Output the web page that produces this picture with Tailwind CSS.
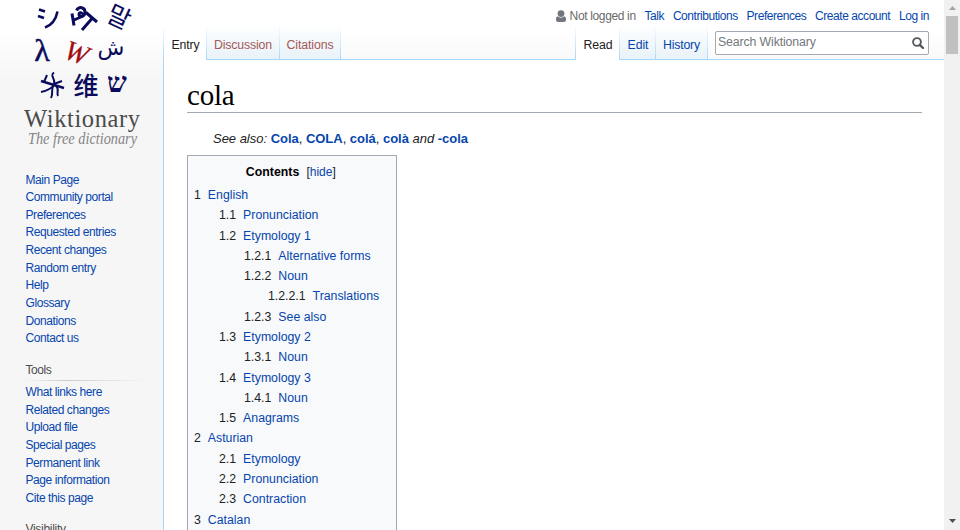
<!DOCTYPE html>
<html lang="en">
<head>
<meta charset="utf-8">
<title>cola - Wiktionary</title>
<script src="https://cdn.jsdelivr.net/npm/@tailwindcss/browser@4"></script>
</head>
<body class="h-[530px] w-[960px] overflow-hidden bg-[#f6f6f6] font-['Liberation_Sans',Arial,sans-serif] text-[#222]">
<div class="flex h-[530px] w-[960px] bg-linear-to-b from-white from-[30px] to-[#f6f6f6] to-[82px]">

  <aside class="w-[163px] shrink-0">
    <svg class="block" width="163" height="156" viewBox="0 0 163 156">
      <g fill="none" stroke="#0b0b5c" stroke-width="2.600">
        <path d="M39 9.500L45 11.500M38 16L44 18M45 27.500C52 25 56 19 57.500 11.500"/>
        <path d="M72 13.500L74 25.500M74 20L82 16.500M76.500 10.500C79 6 85 7 85 12C85 17 79 18 79 14.500C79 12.500 82 12 82 14.500M86 12.500L97 22M92 18.500L82 30" stroke-width="3"/>
        <path d="M41 81L64 88" stroke-width="2.400"/>
        <path d="M54 72.500C49 76 56 78 54 84M47 75L44 82M54 85C51 89 46 91 41 92M54 85C50 89 54 92 51 98M54 84L62 81M56 86C60 89 56 93 58 96" stroke-width="2"/>
      </g>
      <g fill="#0b0b5c" text-anchor="middle">
        <text x="119" y="26" font-size="25" font-family="'Noto Sans CJK KR',sans-serif" transform="rotate(25 119 17)">말</text>
        <text x="42" y="61" font-size="32" font-family="'Liberation Serif',serif" stroke="#0b0b5c" stroke-width=".5">λ</text>
        <text x="77" y="62" font-size="28" fill="#a00c14" font-style="italic" font-family="'Liberation Serif',serif" stroke="#a00c14" stroke-width=".3" transform="rotate(20 77 52)">W</text>
        <text x="111" y="55" font-size="22" font-family="'DejaVu Sans',sans-serif">ش</text>
        <text x="86" y="95" font-size="25" font-weight="500" font-family="'Noto Sans CJK SC',sans-serif">维</text>
        <text x="117" y="92" font-size="28" font-weight="bold" font-family="'Liberation Serif','DejaVu Sans',serif">ש</text>
      </g>
      <text x="24" y="127" font-size="24.500" fill="#4a4a4a" textLength="116" font-family="'Liberation Serif',serif">Wiktionary</text>
      <text x="28" y="143.500" font-size="16" fill="#858585" font-style="italic" textLength="109" lengthAdjust="spacingAndGlyphs" font-family="'Liberation Serif',serif">The free dictionary</text>
    </svg>
    <ul class="mt-[15.500px] pl-[25.5px] text-[12px] leading-[17.65px] tracking-[-0.42px] text-[#0645ad]">
      <li>Main Page</li><li>Community portal</li><li>Preferences</li><li>Requested entries</li><li>Recent changes</li><li>Random entry</li><li>Help</li><li>Glossary</li><li>Donations</li><li>Contact us</li>
    </ul>
    <h3 class="mt-[12.500px] pl-[25.5px] text-[12px] leading-[18px] tracking-[-0.42px] text-[#4d4d4d]">Tools</h3>
    <div class="mt-px ml-[24px] h-px w-[124px] bg-linear-to-r from-transparent via-[#c8ccd1] via-33% to-transparent"></div>
    <ul class="mt-[3.500px] pl-[25.5px] text-[12px] leading-[17.65px] tracking-[-0.42px] text-[#0645ad]">
      <li>What links here</li><li>Related changes</li><li>Upload file</li><li>Special pages</li><li>Permanent link</li><li>Page information</li><li>Cite this page</li>
    </ul>
    <h3 class="mt-[12px] pl-[25.5px] text-[12px] leading-[18px] tracking-[-0.3px] text-[#4d4d4d]">Visibility</h3>
  </aside>

  <div class="flex h-[530px] w-[781px] shrink-0 flex-col">
    <header class="flex h-[60px] shrink-0 flex-col bg-linear-to-b from-white from-50% to-[#f9f9f9]">
      <div class="flex h-[24px] items-center justify-end gap-[8.800px] pt-[7px] pr-[15px] text-[12px] leading-[16px] tracking-[-0.45px] text-[#0645ad]">
        <span class="flex items-center gap-[4px] tracking-[-0.35px] text-[#6a6a6a]">
          <svg width="10" height="12" viewBox="0 0 10 12" fill="#72777d"><circle cx="5" cy="3.6" r="3.4"/><path d="M1.8 6.3C3.5 8.2 6.5 8.2 8.2 6.3C9.6 6.7 10 7.6 10 9v1c0 1.3-1 2-2.200 2H2.200C1 12 0 11.300 0 10V9c0-1.400.4-2.300 1.800-2.700z"/></svg>
          Not logged in</span>
        <span>Talk</span><span>Contributions</span><span>Preferences</span><span>Create account</span><span>Log in</span>
      </div>
      <div class="flex h-[36px] text-[12.300px] leading-[16px] tracking-[-0.1px]">
        <div class="w-px bg-linear-to-b from-white to-[#a7d7f9]"></div>
        <div class="w-[42px] bg-white pt-[13px] pl-px text-center">Entry</div>
        <div class="w-px bg-linear-to-b from-white to-[#a7d7f9]"></div>
        <div class="w-[72px] border-b border-[#a7d7f9] bg-linear-to-b from-white to-[#e8f2f8] pt-[13px] text-center tracking-[-0.15px] text-[#a55858]">Discussion</div>
        <div class="w-px bg-linear-to-b from-white to-[#a7d7f9]"></div>
        <div class="w-[60px] border-b border-[#a7d7f9] bg-linear-to-b from-white to-[#e8f2f8] pt-[13px] text-center text-[#a55858]">Citations</div>
        <div class="w-px bg-linear-to-b from-white to-[#a7d7f9]"></div>
        <div class="flex-1 border-b border-[#a7d7f9]"></div>
        <div class="w-px bg-linear-to-b from-white to-[#a7d7f9]"></div>
        <div class="w-[43px] bg-white pt-[13px] pl-px text-center">Read</div>
        <div class="w-px bg-linear-to-b from-white to-[#a7d7f9]"></div>
        <div class="w-[35px] border-b border-[#a7d7f9] bg-linear-to-b from-white to-[#e8f2f8] pt-[13px] pl-px text-center text-[#0645ad]">Edit</div>
        <div class="w-px bg-linear-to-b from-white to-[#a7d7f9]"></div>
        <div class="w-[51px] border-b border-[#a7d7f9] bg-linear-to-b from-white to-[#e8f2f8] pt-[13px] text-center tracking-[-0.2px] text-[#0645ad]">History</div>
        <div class="w-px bg-linear-to-b from-white to-[#a7d7f9]"></div>
        <div class="w-[236px] border-b border-[#a7d7f9] pt-[7px] pl-[7px]">
          <div class="flex h-[24px] w-[214px] items-center justify-between rounded-[2px] border border-[#a2a9b1] bg-white pr-[4px] pl-[2px] text-[12.300px] tracking-[-0.120px] text-[#72777d]">
            <span class="-mt-[2px]">Search Wiktionary</span>
            <svg width="12" height="12" viewBox="0 0 12 12" fill="none" stroke="#54595d"><circle cx="5" cy="5" r="3.900" stroke-width="1.900"/><path d="M7.800 7.800L11 11" stroke-width="2.400" stroke-linecap="round"/></svg>
          </div>
        </div>
      </div>
    </header>

    <main class="h-[470px] border-l border-[#a7d7f9] bg-white pr-[22px] pl-[22px]">
      <h1 class="ml-px h-[53px] border-b border-[#a2a9b1] pt-[18px] font-['Liberation_Serif',serif] text-[29px] leading-[34px] tracking-[-0.2px] text-black">cola</h1>
      <p class="mt-[17px] pl-[27px] text-[13px] leading-[18px] tracking-[-0.02px] italic">See also: <b class="text-[#0645ad] not-italic">Cola</b><span class="not-italic">,</span> <b class="text-[#0645ad] not-italic">COLA</b><span class="not-italic">,</span> <b class="text-[#0645ad] not-italic">colá</b><span class="not-italic">,</span> <b class="text-[#0645ad] not-italic">colà</b> and <b class="text-[#0645ad] not-italic">-cola</b></p>
      <nav class="mt-[7px] ml-[0.500px] h-[400px] w-[210px] border border-[#a2a9b1] bg-[#f8f9fa] pt-[7px] pl-[6.500px] text-[12.300px]">
        <div class="-mt-px -ml-[6px] mb-px flex h-[20px] items-center justify-center gap-[7px] pr-[2px]"><b class="tracking-[0.05px] text-black">Contents</b><span class="text-[12px]">[<span class="text-[#0645ad]">hide</span>]</span></div>
        <ul class="pt-[2px] leading-[20.280px] text-[#0645ad]">
          <li class="flex gap-[7px]"><span class="text-[#222]">1</span>English</li>
          <li class="flex gap-[7px] pl-[25px]"><span class="text-[#222]">1.1</span>Pronunciation</li>
          <li class="flex gap-[7px] pl-[25px]"><span class="text-[#222]">1.2</span>Etymology 1</li>
          <li class="flex gap-[7px] pl-[50px]"><span class="text-[#222]">1.2.1</span>Alternative forms</li>
          <li class="flex gap-[7px] pl-[50px]"><span class="text-[#222]">1.2.2</span>Noun</li>
          <li class="flex gap-[7px] pl-[74px]"><span class="text-[#222]">1.2.2.1</span>Translations</li>
          <li class="flex gap-[7px] pl-[50px]"><span class="text-[#222]">1.2.3</span>See also</li>
          <li class="flex gap-[7px] pl-[25px]"><span class="text-[#222]">1.3</span>Etymology 2</li>
          <li class="flex gap-[7px] pl-[50px]"><span class="text-[#222]">1.3.1</span>Noun</li>
          <li class="flex gap-[7px] pl-[25px]"><span class="text-[#222]">1.4</span>Etymology 3</li>
          <li class="flex gap-[7px] pl-[50px]"><span class="text-[#222]">1.4.1</span>Noun</li>
          <li class="flex gap-[7px] pl-[25px]"><span class="text-[#222]">1.5</span>Anagrams</li>
          <li class="flex gap-[7px]"><span class="text-[#222]">2</span>Asturian</li>
          <li class="flex gap-[7px] pl-[25px]"><span class="text-[#222]">2.1</span>Etymology</li>
          <li class="flex gap-[7px] pl-[25px]"><span class="text-[#222]">2.2</span>Pronunciation</li>
          <li class="flex gap-[7px] pl-[25px]"><span class="text-[#222]">2.3</span>Contraction</li>
          <li class="flex gap-[7px]"><span class="text-[#222]">3</span>Catalan</li>
        </ul>
      </nav>
    </main>
  </div>

  <div class="flex h-[530px] w-[16px] shrink-0 flex-col items-center bg-[#f1f1f1]">
    <svg class="mt-[6px]" width="7" height="4" viewBox="0 0 7 4" fill="#a3a3a3"><path d="M0 4L3.500 0L7 4z"/></svg>
    <div class="mt-[6px] h-[38px] w-[12px] bg-[#c1c1c1]"></div>
    <svg class="mt-auto mb-[7px]" width="7" height="4" viewBox="0 0 7 4" fill="#505050"><path d="M0 0L3.500 4L7 0z"/></svg>
  </div>
</div>
</body>
</html>
